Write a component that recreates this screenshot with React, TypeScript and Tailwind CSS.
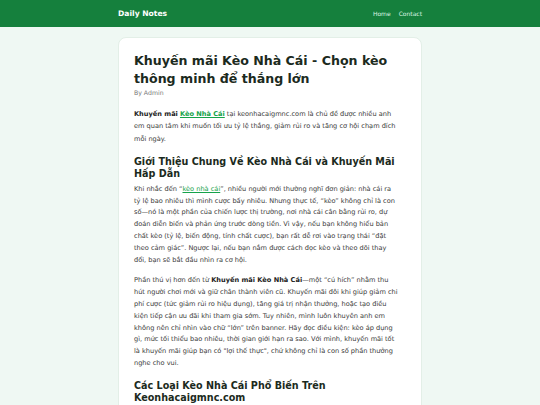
import React from "react";

export default function App() {
  return (
    <div className="min-h-[405px] bg-[#eff8f3] text-[#3a3a3a]" style={{ fontFamily: '"DejaVu Sans", Verdana, sans-serif' }}>
      <header className="bg-[#15803d] h-[27px]">
        <div className="w-[304px] mx-auto h-full flex items-center justify-between">
          <div className="text-white font-bold text-[7.6px]">Daily Notes</div>
          <nav className="flex gap-[8px] text-[6px] text-[#dcf5e3]">
            <a>Home</a>
            <a>Contact</a>
          </nav>
        </div>
      </header>
      <main className="w-[304px] mx-auto mt-[10px]">
        <article className="bg-white rounded-[8px] border border-[#e3efe7] pl-[15px] pr-[22px] pt-[14px] pb-4">
          <h1 className="text-[12.6px] leading-[18px] font-bold text-[#1b2a20]">
            Khuyến mãi Kèo Nhà Cái - Chọn kèo thông minh để thắng lớn
          </h1>
          <div className="text-[6.2px] leading-[8px] text-[#777] mt-[1px]">By Admin</div>
          <p className="text-[6.6px] leading-[12.3px] mt-[11px]">
            <strong className="text-[#222]">Khuyến mãi</strong>{" "}
            <a className="text-[#16a34a] underline font-bold">Kèo Nhà Cái</a> tại keonhacaigmnc.com là chủ đề được nhiều anh em quan tâm khi muốn tối ưu tỷ lệ thắng, giảm rủi ro và tăng cơ hội chạm đích mỗi ngày.
          </p>
          <h2 className="text-[9.6px] leading-[12px] font-bold text-[#1b2a20] mt-[11px]">
            Giới Thiệu Chung Về Kèo Nhà Cái và Khuyến Mãi Hấp Dẫn
          </h2>
          <p className="text-[6.6px] leading-[11.8px] mt-[4px]">
            Khi nhắc đến “<a className="text-[#16a34a] underline">kèo nhà cái</a>”, nhiều người mới thường nghĩ đơn giản: nhà cái ra tỷ lệ bao nhiêu thì mình cược bấy nhiêu. Nhưng thực tế, “kèo” không chỉ là con số—nó là một phần của chiến lược thị trường, nơi nhà cái cân bằng rủi ro, dự đoán diễn biến và phản ứng trước dòng tiền. Vì vậy, nếu bạn không hiểu bản chất kèo (tỷ lệ, biến động, tính chất cược), bạn rất dễ rơi vào trạng thái “đặt theo cảm giác”. Ngược lại, nếu bạn nắm được cách đọc kèo và theo dõi thay đổi, bạn sẽ bắt đầu nhìn ra cơ hội.
          </p>
          <p className="text-[6.6px] leading-[11.8px] mt-[9px]">
            Phần thú vị hơn đến từ <strong className="text-[#222]">Khuyến mãi Kèo Nhà Cái</strong>—một “cú hích” nhằm thu hút người chơi mới và giữ chân thành viên cũ. Khuyến mãi đôi khi giúp giảm chi phí cược (tức giảm rủi ro hiệu dụng), tăng giá trị nhận thưởng, hoặc tạo điều kiện tiếp cận ưu đãi khi tham gia sớm. Tuy nhiên, mình luôn khuyên anh em không nên chỉ nhìn vào chữ “lớn” trên banner. Hãy đọc điều kiện: kèo áp dụng gì, mức tối thiểu bao nhiêu, thời gian giới hạn ra sao. Với mình, khuyến mãi tốt là khuyến mãi giúp bạn có "lợi thế thực", chứ không chỉ là con số phần thưởng nghe cho vui.
          </p>
          <h2 className="text-[9.6px] leading-[12px] font-bold text-[#1b2a20] mt-[10px]">
            Các Loại Kèo Nhà Cái Phổ Biến Trên Keonhacaigmnc.com
          </h2>
        </article>
      </main>
    </div>
  );
}
